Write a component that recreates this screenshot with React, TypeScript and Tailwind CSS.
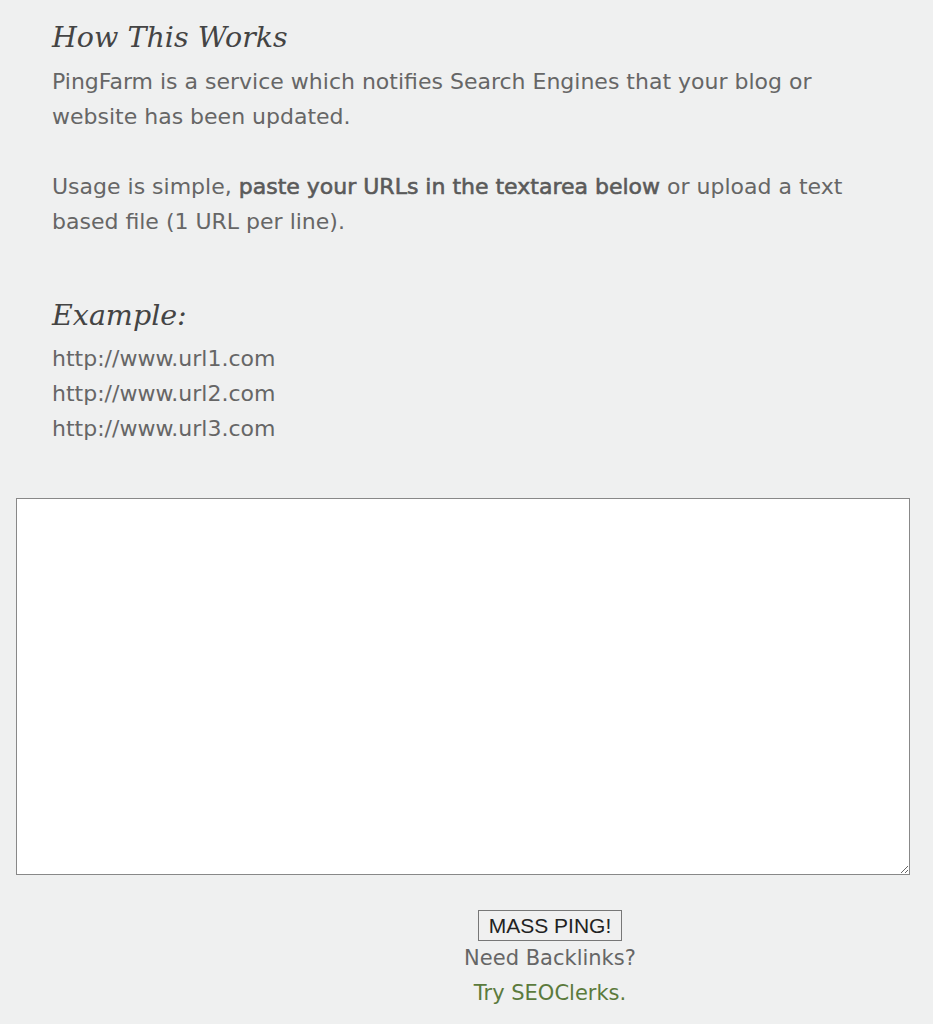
export default function App() {
  return (
    <div className="min-h-[1024px] w-full bg-[#eff0f0] text-[#666] font-['DejaVu_Sans',sans-serif]">
      <div className="px-[52px] pt-[18px]">
        <h2 className="font-['DejaVu_Serif',serif] italic text-[28.5px] leading-[40px] text-[#444]">
          How This Works
        </h2>
        <div className="max-w-[800px]">
          <p className="mt-[6px] text-[22px] leading-[35px]">
            PingFarm is a service which notifies Search Engines that your blog or website has been
            updated.
          </p>
          <p className="mt-[35px] text-[22px] leading-[35px]">
            Usage is simple,{" "}
            <strong className="font-normal text-[#5a5a5a] [-webkit-text-stroke:0.6px_#5a5a5a]">
              paste your URLs in the textarea below
            </strong>{" "}
            or upload a text based file (1 URL per line).
          </p>
        </div>
        <h3 className="mt-[57px] font-['DejaVu_Serif',serif] italic text-[28.5px] leading-[40px] text-[#444]">
          Example:
        </h3>
        <div className="mt-[5px] text-[22px] leading-[35px]">
          <div>http://www.url1.com</div>
          <div>http://www.url2.com</div>
          <div>http://www.url3.com</div>
        </div>
      </div>
      <div className="mt-[52px] pl-[16px] pr-[23px]">
        <textarea className="block h-[377px] w-full border border-[#888] bg-white" />
      </div>
      <div className="flex flex-col items-center pl-[167px] pt-[35px] text-[21px] leading-[35px]">
        <button className="h-[31px] border border-[#777] bg-[#f0f0f0] px-[10px] font-['Liberation_Sans',sans-serif] text-[21px] leading-none text-[#222]">
          MASS PING!
        </button>
        <div>Need Backlinks?</div>
        <div className="text-[#5b7a3c]">Try SEOClerks.</div>
      </div>
    </div>
  )
}
